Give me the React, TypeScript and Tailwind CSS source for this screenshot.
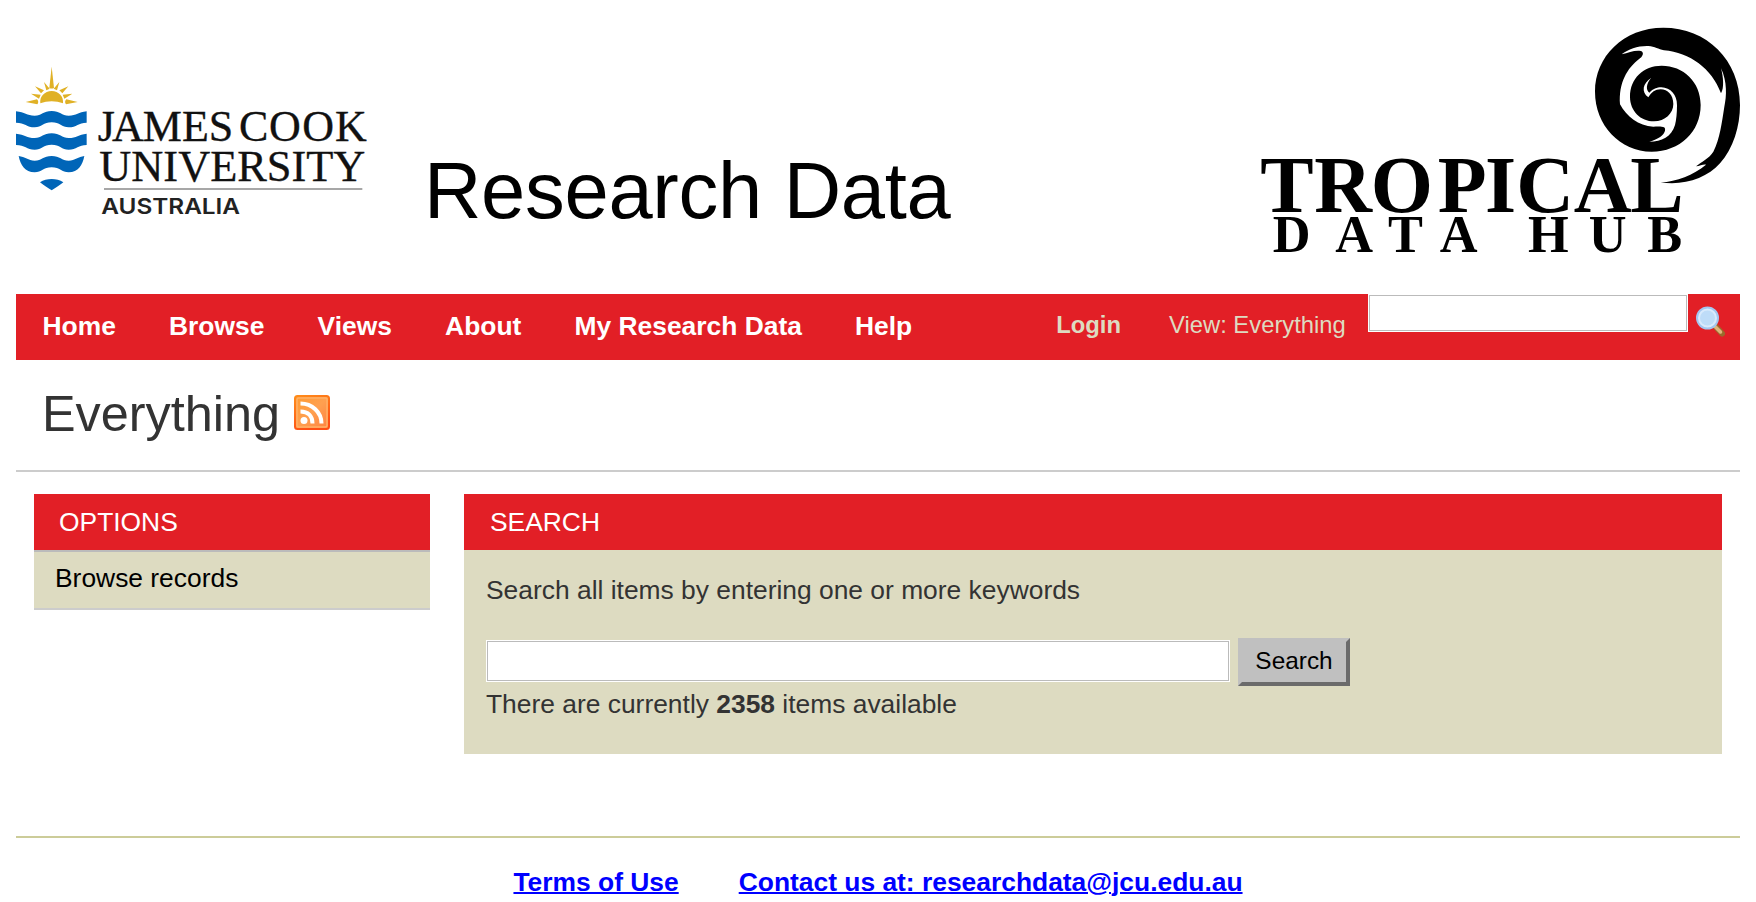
import React from "react";

const NAV = ["Home", "Browse", "Views", "About", "My Research Data", "Help"];

function JcuLogo() {
  return (
    <svg className="block h-[180px] w-[384px] shrink-0" viewBox="48 0 1152 540">
      <g fill="#e0b126">
        <path d="M121 160C118 140 134 123 155 123S192 140 189 160C168 152 142 152 121 160Z" />
        <path d="M155 50L162 114Q155 117 148 114Z" />
        <path d="M132 96L149 116L139 121ZM178 96L161 116L171 121ZM105 109L132 121L123 130ZM205 109L178 121L187 130ZM93 131L122 134L117 146ZM217 131L188 134L193 146ZM77 156L111 148Q118 156 112 163ZM233 156L199 148Q192 156 198 163Z" />
      </g>
      <g fill="#0065b8">
        <path d="M48 184C75 186 80 197 104 197C125 197 130 183 155 183C180 183 185 197 206 197C230 197 235 186 260 184V218C235 218 230 232 206 232C185 232 180 217 155 217C130 217 125 232 104 232C80 232 75 218 48 218Z" />
        <path d="M48 251C75 253 80 264 104 264C125 264 130 250 155 250C180 250 185 264 206 264C230 264 235 253 260 251V285C235 285 230 299 206 299C185 299 180 284 155 284C130 284 125 299 104 299C80 299 75 285 48 285Z" />
        <path d="M56 318C75 320 85 332 104 332C125 332 130 318 155 318C180 318 185 332 206 332C225 332 235 320 253 318C248 345 235 367 206 367C185 367 180 352 155 352C130 352 125 367 104 367C75 367 61 345 56 318Z" />
        <path d="M120 397C140 384 170 384 190 397C180 406 168 412 155 421C142 412 130 406 120 397Z" />
      </g>
      <g fill="#111" stroke="#111" strokeWidth="1" fontFamily="'Liberation Serif', serif" fontSize="132">
        <text y="273" x="293 336 428 546 626 690 717 807 907 1005">JAMES COOK</text>
        <text x="298" y="392" textLength="798" lengthAdjust="spacingAndGlyphs">UNIVERSITY</text>
      </g>
      <path d="M312 417H1087" stroke="#8a8a8a" strokeWidth="4" />
      <text x="304" y="492" textLength="416" lengthAdjust="spacingAndGlyphs" fill="#222" fontFamily="Inter, sans-serif" fontWeight="600" fontSize="64">AUSTRALIA</text>
    </svg>
  );
}

function TdhLogo() {
  return (
    <svg className="block h-[260px] w-[500px] shrink-0" viewBox="0 0 1500 780">
      <path d="M1262 517C1330 528 1400 505 1440 460C1480 415 1500 350 1500 285C1500 150 1400 53 1270 53C1150 53 1065 140 1065 245C1065 345 1140 425 1235 425C1320 425 1382 365 1382 285C1382 215 1330 167 1265 167C1210 167 1170 205 1170 260C1170 303 1202 334 1242 334C1275 334 1300 310 1300 282C1300 255 1283 238 1262 238C1245 238 1235 246 1225 262C1203 245 1208 220 1234 203C1218 222 1217 238 1228 248C1240 236 1250 232 1264 232C1292 233 1311 255 1311 285C1311 310 1309 330 1305 345C1295 380 1265 395 1228 395C1255 387 1272 375 1275 362C1277 350 1270 349 1240 350C1195 348 1160 320 1140 283C1136 220 1160 175 1200 145C1212 135 1212 123 1198 122C1180 121 1165 128 1145 133C1165 117 1195 107 1225 108C1245 110 1255 117 1272 121C1350 128 1415 175 1443 250C1453 235 1450 200 1443 175C1462 215 1460 260 1453 290C1445 340 1440 385 1420 425C1408 445 1385 455 1368 469C1380 468 1390 462 1398 464C1360 495 1310 515 1262 517Z" />
      <g fontFamily="'Liberation Serif', serif" fontWeight="700">
        <text y="605" fontSize="240" x="61 223 392 593 735 829 1001 1171">TROPICAL</text>
        <text y="726" fontSize="157" x="98 286 444 599 760 864 1046 1222">DATA HUB</text>
      </g>
    </svg>
  );
}

function RssIcon() {
  return (
    <svg className="block h-[35px] w-9" viewBox="0 0 36 35">
      <defs>
        <linearGradient id="rss" x1="0" y1="0" x2="1" y2="1">
          <stop offset="0" stopColor="#ff9a2e" />
          <stop offset="0.5" stopColor="#ffa050" />
          <stop offset="1" stopColor="#ff8040" />
        </linearGradient>
        <linearGradient id="rssEdge" x1="0" y1="0" x2="0.4" y2="1">
          <stop offset="0" stopColor="#ff8c1a" />
          <stop offset="1" stopColor="#ff4f14" />
        </linearGradient>
      </defs>
      <rect x="1" y="1" width="34" height="33" rx="2.5" fill="url(#rss)" stroke="url(#rssEdge)" strokeWidth="2" />
      <rect x="3" y="3" width="30" height="29" rx="1.5" fill="none" stroke="#ffb066" strokeWidth="1.5" />
      <circle cx="10" cy="25.5" r="3.5" fill="#fff" />
      <path d="M6.5 16.5C14 16.5 18.5 21 18.5 28.5M6.5 8.5C18 8.5 27.5 17 27.5 28.5" fill="none" stroke="#fff" strokeWidth="4" />
    </svg>
  );
}

function MagnifierIcon() {
  return (
    <svg className="block h-8 w-8" viewBox="0 0 32 32">
      <path d="M21 21L27 27.5" stroke="#9a6a2c" strokeWidth="6" strokeLinecap="round" />
      <path d="M20 20.5L25.500 26" stroke="#dfb47c" strokeWidth="3.5" strokeLinecap="round" />
      <circle cx="12.5" cy="12" r="10.5" fill="#d9eafc" stroke="#a3c6f0" strokeWidth="2" />
      <circle cx="12.5" cy="12" r="7.5" fill="#bedcf8" />
    </svg>
  );
}

export default function App() {
  return (
    <div className="h-[902px] overflow-hidden bg-white px-4 font-['Liberation_Sans',sans-serif] text-[26.4px] leading-[30px] text-[#333]">
      <header className="flex h-[294px] items-start">
        <div className="pt-[50px]"><JcuLogo /></div>
        <h1 className="pt-[145px] pl-[24px] text-[79.5px] leading-[92px] tracking-[-0.3px] whitespace-nowrap text-black">Research Data</h1>
        <div className="ml-auto pt-[10px]"><TdhLogo /></div>
      </header>

      <nav className="flex h-[66px] items-start bg-[#e21f26] pl-[26.5px] font-bold text-white">
        <ul className="flex gap-[53.2px] pt-[17px] text-[26.4px]">
          {NAV.map((n) => <li key={n} className="whitespace-nowrap">{n}</li>)}
        </ul>
        <div className="ml-auto flex text-[23.8px] leading-[30px] text-[#dddbc1]">
          <span className="pt-4">Login</span>
          <span className="w-[199px] pt-4 pl-12 font-normal whitespace-nowrap">View: Everything</span>
        </div>
        <div className="ml-[48px] h-[38px] w-80 border border-white bg-white"><div className="h-full border border-[#bbb]" /></div>
        <div className="w-[52px] pt-3 pl-[7px]"><MagnifierIcon /></div>
      </nav>

      <div className="flex h-28 items-start gap-[14px] border-b-2 border-[#ccc] pl-[26px]">
        <h2 className="pt-[25px] text-[50.4px] leading-[58px]">Everything</h2>
        <div className="pt-[35px]"><RssIcon /></div>
      </div>

      <main className="flex items-start gap-[34px] px-[18px] pt-[22px]">
        <aside className="w-[396px]">
          <h3 className="h-14 bg-[#e21f26] pt-[13px] pl-[25px] text-white">OPTIONS</h3>
          <div className="h-[60px] border-y-2 border-t-[#bbb] border-b-[#ccc] bg-[#dddbc1] pt-[11px] pl-[21px] text-black">Browse records</div>
        </aside>
        <section className="h-[260px] flex-1 bg-[#dddbc1]">
          <h3 className="h-14 bg-[#e21f26] pt-[13px] pl-[26px] text-white">SEARCH</h3>
          <div className="pt-[25px] pl-[22px]">
            <p>Search all items by entering one or more keywords</p>
            <div className="mt-[33px] flex h-12 items-start gap-2">
              <div className="mt-0.5 h-[42px] w-[744px] border border-white bg-white"><div className="h-full border border-[#bbb]" /></div>
              <button className="h-12 w-28 border-4 border-t-[#c0c0c0] border-r-[#6b6b6b] border-b-[#6b6b6b] border-l-[#c0c0c0] bg-[#c0c0c0] pb-0.5 text-[24.4px] leading-[38px] text-black">Search</button>
            </div>
            <p className="mt-[3px]">There are currently <b>2358</b> items available</p>
          </div>
        </section>
      </main>

      <footer className="mt-[82px] flex justify-center gap-[60px] border-t-2 border-[#cccc99] pt-[29px] font-bold text-[#00f]">
        <a className="underline decoration-2">Terms of Use</a>
        <a className="underline decoration-2">Contact us at: researchdata@jcu.edu.au</a>
      </footer>
    </div>
  );
}
